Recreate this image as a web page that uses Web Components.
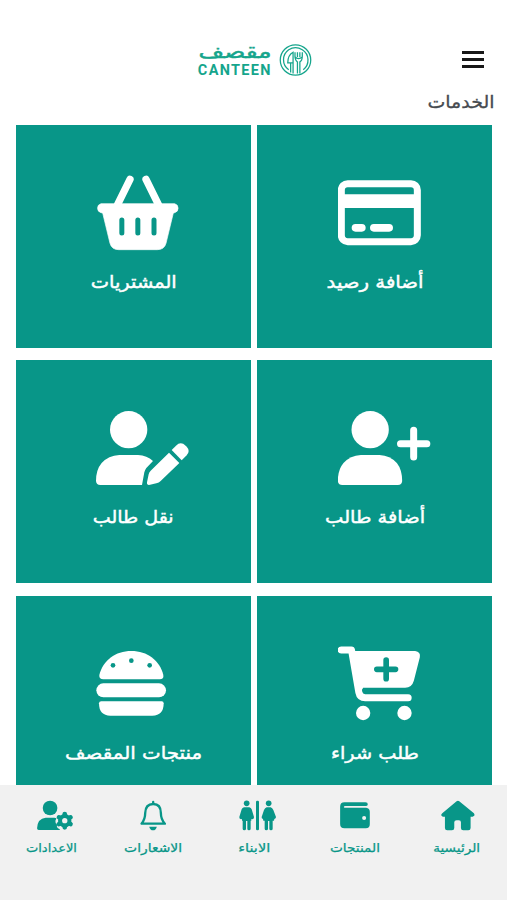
<!DOCTYPE html>
<html lang="ar" dir="rtl">
<head>
<meta charset="utf-8">
<title>مقصف</title>
<style>
html,body{margin:0;height:100%;overflow:hidden;background:#fff}
body{font-family:"DejaVu Sans",sans-serif}
</style>
</head>
<body>
<canteen-app></canteen-app>
<script>
const G='#089688';
const icons={
card:['84.5 45 288 240','<rect x="94.500" y="71" width="228" height="174" rx="19" fill="none" stroke="#fff" stroke-width="21"/><path d="M95 103H322V144H95Z"/><path d="M137 203.500H156M192 203.500H238" stroke="#fff" stroke-width="23" stroke-linecap="round"/>'],
basket:['48 45 288 240','<path d="M150 58L113 133M198 58L235 133" stroke="#fff" stroke-width="22" stroke-linecap="round"/><path d="M63 131H284A14 14 0 0 1 284 158L280 159L258 250Q253 269 232 269H116Q95 269 90 250L68 159L63 158A14 14 0 0 1 63 131Z" stroke="#fff" stroke-width="2"/><path d="M125.500 180V219M173.500 180V219M222 180V219" stroke="#089688" stroke-width="15" stroke-linecap="round"/>'],
add:['84.5 45 288 240','<circle cx="181" cy="104" r="56"/><path d="M153 180H209Q241 182 261 204Q277 224 277 258Q276 270 264 270H97Q85 270 84 258Q84 224 101 204Q121 182 153 180Z"/><path d="M311.500 106V186M272 146H351" stroke="#fff" stroke-width="21" stroke-linecap="round"/>'],
move:['48 45 288 240','<circle cx="146" cy="104" r="56"/><path d="M118 180H174Q201 182 219 198L199 219Q195 224 193 232L186 270H61Q49 270 48 258Q48 224 65 204Q85 182 118 180Z"/><path d="M267 173L298 204L242 258Q237 263 229 265L207 270Q200 270 201 262L206 238Q207 232 212 227Z"/><path d="M275 165L288 152Q302 138 317 152L320 155Q332 168 320 181L305 196Z"/>'],
cart:['84.5 33 288 240','<path d="M94 45H125L147 172Q150 188 166 188H295" fill="none" stroke="#fff" stroke-width="21" stroke-linecap="round" stroke-linejoin="round"/><path d="M128 48H316Q333 50 330 67L312 137Q306 158 286 158H160L152 172L140 130Z"/><path d="M229 75V131M201 103H257" stroke="#089688" stroke-width="17" stroke-linecap="round"/><circle cx="160" cy="234" r="21.500"/><circle cx="284" cy="234" r="21.500"/>'],
burger:['137 32 288 240','<path d="M159 132Q146 132 147 119C158 75 195 47 243 47S328 75 339 119Q341 132 328 132Z"/><rect x="138" y="144" width="209" height="42" rx="21"/><path d="M153 198H334Q340 198 340 204Q340 241 306 241H180Q146 241 146 204Q146 198 153 198Z"/><g fill="#089688"><circle cx="188" cy="90" r="7"/><circle cx="243" cy="76" r="7"/><circle cx="298" cy="90" r="7"/></g>'],
home:['643.2 54 132 102','<path d="M711 64Q715 60 719 64L763 100Q768 108 759 110H753V144Q753 151 746 151H731Q724 151 724 144V127Q724 121 718 121H711Q704 121 704 127V144Q704 151 697 151H683Q676 151 676 144V110H670Q661 107 668 100Z"/>'],
wallet:['339.6 54 132 102','<path d="M374 67H437Q444 67 444 73T437 78H377Q372 78 372 81T377 83H439Q450 84 450 95V133Q450 145 438 145H374Q361 145 361 132V80Q361 67 374 67Z"/><circle cx="433" cy="114" r="6" fill="#f1f1f1"/>'],
kids:['36 54 132 102','<rect x="108" y="62" width="9" height="89" rx="4"/><circle cx="80" cy="70" r="8.500"/><path d="M72 82H88Q93 83 95 88L102 111Q103 117 97 118L94 117V122H92V146Q92 151 87 151T82 146V123H78V146Q78 151 73 151T68 146V122H66V117L63 118Q57 117 58 111L65 88Q67 83 72 82Z"/><circle cx="146" cy="70" r="8.500"/><path d="M140 82H152Q157 84 160 90L168 111Q168 116 163 117L162 122H158V146Q158 151 153 151T148 146V123H144V146Q144 151 139 151T134 146V122H130L129 117Q124 116 125 111L132 90Q135 84 140 82Z"/>'],
bell:['392.4 54 132 102','<path d="M459 66V72M424 131H494Q482 118 482 99Q482 72 459 72T435 99Q435 118 424 131Z" fill="none" stroke="#089688" stroke-width="7" stroke-linejoin="round" stroke-linecap="round"/><path d="M447 140H470Q467 151 458.500 151T447 140Z"/>'],
settings:['88.8 54 132 102','<circle cx="149" cy="84" r="22"/><path d="M136 113H162Q166 113 168 115L165 122Q164 129 170 134Q167 143 177 147L179 150H115Q110 150 110 145Q111 115 136 113Z"/><circle cx="193" cy="122" r="20"/><path d="M193 102V142M175.700 112L210.300 132M175.700 132L210.300 112" stroke="#089688" stroke-width="14" stroke-linecap="round"/><circle cx="193" cy="122" r="8" fill="#f1f1f1"/>'],
};
const define=(name,render,after)=>customElements.define(name,class extends HTMLElement{
  connectedCallback(){
    if(this.shadowRoot)return;
    this.attachShadow({mode:'open'}).innerHTML=render(this);
    if(after)after(this);
  }
});
// One line of text drawn at an exact width
define('fit-text',()=>`<style>:host{display:flex;justify-content:center;direction:rtl;white-space:nowrap;line-height:1}span{flex:none}</style><span><slot></slot></span>`,
 el=>{const s=el.shadowRoot.querySelector('span');const w=+el.getAttribute('width');
  el.style.width=w+'px';s.style.transform=`scaleX(${w/s.getBoundingClientRect().width})`;
  s.style.transformOrigin='center';});
define('app-icon',el=>`<style>:host{display:block}svg{display:block;width:100%;height:100%;fill:currentColor}</style><svg viewBox="${icons[el.getAttribute('name')][0]}">${icons[el.getAttribute('name')][1]}</svg>`);
define('service-tile',el=>`<style>
:host{display:flex;flex-direction:column;align-items:center;box-sizing:border-box;height:222.5px;padding-top:50px;background:${G};color:#fff;font-size:17.5px;font-weight:400;-webkit-text-stroke:.45px #fff}
app-icon{width:96px;height:80px;align-self:flex-end;margin-left:80.5px}
fit-text{margin:19px 0 0 1px}
</style><app-icon name="${el.getAttribute('icon')}"></app-icon><fit-text width="${el.getAttribute('text-width')}">${el.getAttribute('label')}</fit-text>`);
define('nav-item',el=>`<style>
:host{flex:1;display:flex;flex-direction:column;align-items:center;color:${G};font-size:12px;-webkit-text-stroke:.25px ${G}}
app-icon{width:44px;height:34px}fit-text{margin-top:10px}
</style><app-icon name="${el.getAttribute('icon')}"></app-icon><fit-text width="${el.getAttribute('text-width')}">${el.getAttribute('label')}</fit-text>`);
define('canteen-logo',()=>`<style>
:host{display:flex;direction:ltr;align-items:center;gap:7px;color:#15a58c}
.words{display:flex;flex-direction:column;align-items:center}
.ar{font-size:19px;line-height:21px;-webkit-text-stroke:.5px}
.en{font:bold 14px/16px Roboto,sans-serif;letter-spacing:1.3px;direction:ltr}
svg{display:block;width:34px;height:34px;fill:none;stroke:currentColor;stroke-width:1.3}
</style><div class="words"><fit-text class="ar" width="73">مقصف</fit-text><fit-text class="en" width="74">CANTEEN</fit-text></div>
<svg viewBox="0 0 34 34"><circle cx="17" cy="17" r="15.700"/><path d="M10 27A12.500 12.500 0 0 1 10 6.500Q17 2 24 6.500A12.500 12.500 0 0 1 25 27"/><path d="M14.500 31V9Q9 12 9 20H12V30M12 20H14.500M19 31V19Q16 17 16.500 10V9M19 9V14M21.500 9V14M24 9V13Q24 18 21.500 19V31M16.500 14Q20 17 24 14"/></svg>`);
define('menu-button',()=>`<style>:host{display:flex;flex-direction:column;gap:3.500px;width:22px}i{height:2.500px;background:#181818;border-bottom:.01px solid #181818}</style><i></i><i></i><i></i>`);
define('app-header',()=>`<style>
:host{display:grid;grid-template-columns:1fr 114px 1fr;grid-template-rows:37px;align-items:center;direction:ltr;height:37px;padding:41px 23px 0 25px}
canteen-logo{grid-column:2}menu-button{justify-self:end}
</style><canteen-logo></canteen-logo><menu-button></menu-button>`);
define('canteen-app',()=>`<style>
:host{display:flex;flex-direction:column;height:900px;width:507px;overflow:hidden}
main{flex:1;min-height:0;overflow:hidden}
.title{font-size:17.5px;line-height:18px;color:#464b50;margin:15px 12.5px 0 0;-webkit-text-stroke:.3px #464b50}
section{display:grid;grid-template-columns:1fr 1fr;gap:12.800px 6.500px;padding:0 15px 0 15.500px;margin-top:14px}
nav{flex:none;box-sizing:border-box;height:115px;background:#f1f1f1;display:flex;padding:13px 0 0 1px}
</style>
<main><app-header></app-header><fit-text class="title" width="67">الخدمات</fit-text>
<section>
<service-tile icon="card" label="أضافة رصيد" text-width="97"></service-tile>
<service-tile icon="basket" label="المشتريات" text-width="86"></service-tile>
<service-tile icon="add" label="أضافة طالب" text-width="100"></service-tile>
<service-tile icon="move" label="نقل طالب" text-width="81"></service-tile>
<service-tile icon="cart" label="طلب شراء" text-width="88"></service-tile>
<service-tile icon="burger" label="منتجات المقصف" text-width="137"></service-tile>
</section></main>
<nav>
<nav-item icon="home" label="الرئيسية" text-width="47"></nav-item>
<nav-item icon="wallet" label="المنتجات" text-width="50"></nav-item>
<nav-item icon="kids" label="الابناء" text-width="32"></nav-item>
<nav-item icon="bell" label="الاشعارات" text-width="58"></nav-item>
<nav-item icon="settings" label="الاعدادات" text-width="51"></nav-item>
</nav>`);
</script>
</body>
</html>
